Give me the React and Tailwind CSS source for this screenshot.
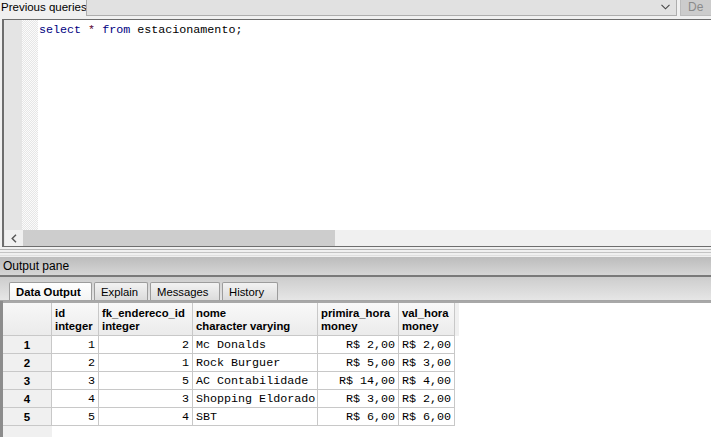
import React from 'react';

const COLS = [
  { name: 'id', type: 'integer', w: 'w-[47px]' },
  { name: 'fk_endereco_id', type: 'integer', w: 'w-[94px]' },
  { name: 'nome', type: 'character varying', w: 'w-[125px]' },
  { name: 'primira_hora', type: 'money', w: 'w-[81px]' },
  { name: 'val_hora', type: 'money', w: 'w-[56px]' },
];

const ROWS = [
  ['1', '2', 'Mc Donalds', 'R$ 2,00', 'R$ 2,00'],
  ['2', '1', 'Rock Burguer', 'R$ 5,00', 'R$ 3,00'],
  ['3', '5', 'AC Contabilidade', 'R$ 14,00', 'R$ 4,00'],
  ['4', '3', 'Shopping Eldorado', 'R$ 3,00', 'R$ 2,00'],
  ['5', '4', 'SBT', 'R$ 6,00', 'R$ 6,00'],
];

const TABS = [
  { label: 'Data Output', w: 'w-[83px]', active: true },
  { label: 'Explain', w: 'w-[54px]' },
  { label: 'Messages', w: 'w-[70px]' },
  { label: 'History', w: 'w-[56px]' },
];

const sans = "font-['Liberation_Sans',Arial,sans-serif]";
const mono = "font-['Liberation_Mono','Courier_New',monospace]";

export default function App() {
  return (
    <div className={`h-[437px] w-[711px] overflow-hidden bg-[#f0f0f0] text-black ${sans}`}>
      {/* previous queries bar */}
      <div className="flex h-[16px]">
        <div className="w-[86px] shrink-0 whitespace-nowrap pl-[1px] text-[11.5px] leading-[15px]">Previous queries</div>
        <div className="flex w-[591px] shrink-0 items-center justify-end border-x border-b border-[#adadad] bg-[#e1e1e1] pr-[6px]">
          <svg width="9" height="6" viewBox="0 0 9 6" className="mb-[1px]">
            <path d="M0.5 0.8 L4.5 4.8 L8.5 0.8" fill="none" stroke="#444" strokeWidth="1.1" />
          </svg>
        </div>
        <div className="ml-[3px] flex-1 border-l border-b border-[#bcbcbc] bg-[#cccccc] pl-[7px] text-[12px] leading-[15px] text-[#8a8a8a]">De</div>
      </div>

      {/* editor frame */}
      <div className="ml-[2px] mt-[3px] border-l-2 border-t border-b border-[#6d6d6d]">
        <div className="border-l border-[#e6e6e6]">
          <div className="flex h-[210px] bg-white">
            <div className="w-[17px] bg-[#e4e4e4]" />
            <div className="w-[16px] bg-[repeating-conic-gradient(#e6e6e6_0%_25%,#fbfbfb_0%_50%)] bg-[length:2px_2px]" />
            <div className={`pl-[1px] pt-[3px] text-[11.7px] leading-[15px] ${mono}`}>
              <span className="text-[#00007f]">select</span>{' '}
              <span className="text-[#5a0030]">*</span>{' '}
              <span className="text-[#00007f]">from</span> estacionamento;
            </div>
          </div>
          <div className="flex h-[16px] bg-[#f0f0f0]">
            <div className="flex w-[17px] items-center justify-center">
              <svg width="6" height="9" viewBox="0 0 6 9">
                <path d="M5 0.8 L1.2 4.5 L5 8.2" fill="none" stroke="#555" strokeWidth="1.4" />
              </svg>
            </div>
            <div className="ml-[1px] w-[312px] bg-[#cdcdcd]" />
          </div>
        </div>
      </div>

      {/* splitter */}
      <div className="h-[10px] pt-[2px]">
        <div className="h-px bg-[#b4b4b4]" />
        <div className="mt-[2px] h-px bg-[#c4c4c4]" />
        <div className="mt-[2px] h-px bg-[#e0e0e0]" />
      </div>

      {/* output pane header */}
      <div className="h-[18px] bg-linear-to-b from-[#bcbcbc] to-[#d6d6d6] pl-[3px] text-[12px] leading-[19px]">Output pane</div>
      <div className="h-[2px] bg-[#7a7a7a]" />

      {/* tab strip */}
      <div className="flex h-[24px] items-end gap-[2px] border-b border-[#a5a5a5] bg-linear-to-b from-[#cdcdcd] to-[#e6e6e6] pl-[9px]">
        {TABS.map((t) => (
          <div
            key={t.label}
            className={`${t.w} h-[18px] rounded-t-[2px] border border-b-0 border-[#9c9c9c] pl-[6px] text-[11.3px] leading-[18px] ${
              t.active
                ? 'bg-linear-to-b from-white to-[#f4f4f4] font-bold'
                : 'bg-linear-to-b from-[#f2f2f2] to-[#dcdcdc]'
            }`}
          >
            {t.label}
          </div>
        ))}
      </div>

      {/* data grid */}
      <div className="flex h-[137px] border-l-[3px] border-[#8c8c8c] bg-white">
        <div className="flex-1 border-t-2 border-[#a8a8a8]">
          <div className="flex h-[33px]">
            <div className="w-[49px] border-r border-b border-[#c8c8c8] bg-linear-to-b from-[#f7f7f7] to-[#ebebeb]" />
            {COLS.map((c) => (
              <div
                key={c.name}
                className={`${c.w} border-r border-b border-[#c8c8c8] bg-linear-to-b from-[#f9f9f9] to-[#ebebeb] pl-[3px] pt-[4px] text-[11.3px] font-bold leading-[13px]`}
              >
                <div>{c.name}</div>
                <div>{c.type}</div>
              </div>
            ))}
            <div className="w-[4px] bg-[#f0f0f0]" />
          </div>
          {ROWS.map((r, i) => (
            <div key={i} className="flex h-[18px]">
              <div className="w-[49px] border-r border-b border-[#c8c8c8] bg-[#f0f0f0] pt-[1px] text-center text-[11.5px] font-bold leading-[16px]">
                {i + 1}
              </div>
              {r.map((v, j) => (
                <div
                  key={j}
                  className={`${COLS[j].w} border-r border-b border-[#c8c8c8] px-[3px] pt-[1px] ${mono} text-[11.7px] leading-[16px] whitespace-pre ${
                    j === 2 || j === 4 ? 'text-left' : 'text-right'
                  }`}
                >
                  {v}
                </div>
              ))}
            </div>
          ))}
          <div className="h-[40px] w-[49px] bg-[#f0f0f0]" />
        </div>
      </div>
    </div>
  );
}
